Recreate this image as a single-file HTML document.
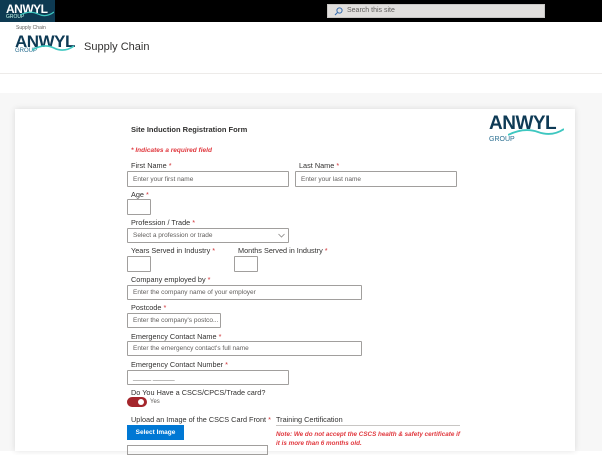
<!DOCTYPE html>
<html><head><meta charset="utf-8"><style>
*{margin:0;padding:0;box-sizing:border-box}
body{width:602px;height:451px;overflow:hidden;background:#fff;font-family:"Liberation Sans",sans-serif;position:relative;color:#323130}
.a{position:absolute;white-space:nowrap}
.lbl{font-size:7.3px;color:#323130;margin-top:1px}
.lbl b{color:#d13438;font-weight:normal}
.in{position:absolute;border:1px solid #a19f9d;background:#fff;font-size:6.5px;color:#605e5c;padding-left:5px;display:flex;align-items:center;border-radius:1px}
.red{color:#e0383e;font-style:italic;font-weight:bold;font-size:6.5px}
</style></head><body>
<div class="a" style="left:0;top:0;width:602px;height:22px;background:#000"></div>
<div class="a" style="left:0;top:0;width:55px;height:22px;background:#0e3a52"></div>
<div class="a" style="left:6px;top:2px;font-size:12px;font-weight:bold;color:#fff;letter-spacing:-0.5px">ANWYL</div>
<div class="a" style="left:6px;top:14px;font-size:5px;color:#cfe">GROUP</div>
<svg class="a" style="left:20px;top:9px" width="34" height="8"><path d="M0 6 Q10 1 18 5 T34 3" stroke="#3ec7c0" stroke-width="1.2" fill="none"/></svg>
<div class="a" style="left:327px;top:4px;width:218px;height:14px;background:#e1dfdd;border:1px solid #c8c6c4"></div>
<svg class="a" style="left:334px;top:7px" width="9" height="9"><circle cx="5.5" cy="3.5" r="2.6" stroke="#3a6fb0" fill="none" stroke-width="1"/><path d="M3.6 5.4 L1 8" stroke="#3a6fb0" stroke-width="1.1"/></svg>
<div class="a" style="left:347px;top:7px;font-size:7px;color:#605e5c">Search this site</div>

<div class="a" style="left:16px;top:25px;font-size:5px;color:#605e5c">Supply Chain</div>
<div class="a" style="left:15px;top:32px;font-size:17px;font-weight:bold;color:#0e3a55;letter-spacing:-0.5px">ANWYL</div>
<div class="a" style="left:15px;top:48px;font-size:6px;color:#2b6f91">GROUP</div>
<svg class="a" style="left:32px;top:41px" width="42" height="12"><path d="M0 9 Q12 2 22 7 T42 5" stroke="#3ec7c0" stroke-width="1.6" fill="none"/></svg>
<div class="a" style="left:84px;top:41px;font-size:11px;color:#323130">Supply Chain</div>
<div class="a" style="left:0;top:73px;width:602px;height:1px;background:#edebe9"></div>
<div class="a" style="left:0;top:93px;width:602px;height:358px;background:#f7f7f7"></div>
<div class="a" style="left:15px;top:109px;width:560px;height:342px;background:#fff;box-shadow:0 0 6px rgba(0,0,0,.12)"></div>

<div class="a" style="left:489px;top:113px;font-size:19px;font-weight:bold;color:#0e3a55;letter-spacing:-0.5px">ANWYL</div>
<div class="a" style="left:489px;top:136px;font-size:7px;color:#2b6f91">GROUP</div>
<svg class="a" style="left:508px;top:124px" width="56" height="14"><path d="M0 11 Q16 3 30 8 T56 5" stroke="#3ec7c0" stroke-width="1.8" fill="none"/></svg>

<div class="a" style="left:131px;top:125px;font-size:7.5px;font-weight:bold">Site Induction Registration Form</div>
<div class="a red" style="left:131px;top:147px">* Indicates a required field</div>

<div class="a lbl" style="left:131px;top:160px">First Name <b>*</b></div>
<div class="in" style="left:127px;top:171px;width:162px;height:16px">Enter your first name</div>
<div class="a lbl" style="left:299px;top:160px">Last Name <b>*</b></div>
<div class="in" style="left:295px;top:171px;width:162px;height:16px">Enter your last name</div>

<div class="a lbl" style="left:131px;top:189px">Age <b>*</b></div>
<div class="in" style="left:127px;top:199px;width:24px;height:16px"></div>

<div class="a lbl" style="left:131px;top:217px">Profession / Trade <b>*</b></div>
<div class="in" style="left:127px;top:228px;width:162px;height:15px">Select a profession or trade</div>
<svg class="a" style="left:278px;top:233px" width="7" height="5"><path d="M0.5 1 L3.5 4 L6.5 1" stroke="#8a8886" fill="none" stroke-width=".8"/></svg>

<div class="a lbl" style="left:131px;top:245px">Years Served in Industry <b>*</b></div>
<div class="a lbl" style="left:238px;top:245px">Months Served in Industry <b>*</b></div>
<div class="in" style="left:127px;top:256px;width:24px;height:16px"></div>
<div class="in" style="left:234px;top:256px;width:24px;height:16px"></div>

<div class="a lbl" style="left:131px;top:274px">Company employed by <b>*</b></div>
<div class="in" style="left:127px;top:285px;width:235px;height:15px">Enter the company name of your employer</div>

<div class="a lbl" style="left:131px;top:302px">Postcode <b>*</b></div>
<div class="in" style="left:127px;top:313px;width:94px;height:15px">Enter the company's postco...</div>

<div class="a lbl" style="left:131px;top:331px">Emergency Contact Name <b>*</b></div>
<div class="in" style="left:127px;top:341px;width:235px;height:15px">Enter the emergency contact's full name</div>

<div class="a lbl" style="left:131px;top:359px">Emergency Contact Number <b>*</b></div>
<div class="in" style="left:127px;top:370px;width:162px;height:15px">_____ ______</div>

<div class="a lbl" style="left:131px;top:387px">Do You Have a CSCS/CPCS/Trade card?</div>
<div class="a" style="left:127px;top:397px;width:20px;height:10px;border-radius:5px;background:#a4262c"></div>
<div class="a" style="left:138px;top:399px;width:6px;height:6px;border-radius:3px;background:#fff"></div>
<div class="a" style="left:150px;top:399px;font-size:6px;color:#605e5c">Yes</div>

<div class="a lbl" style="left:131px;top:414px">Upload an Image of the CSCS Card Front <b>*</b></div>
<div class="a" style="left:127px;top:425px;width:57px;height:15px;background:#0078d4;color:#fff;font-size:6.5px;font-weight:bold;display:flex;align-items:center;justify-content:center">Select Image</div>
<div class="a" style="left:127px;top:445px;width:141px;height:10px;border:1px solid #a19f9d"></div>

<div class="a lbl" style="left:276px;top:414px">Training Certification</div>
<div class="a" style="left:276px;top:425px;width:184px;height:1px;background:#c8c6c4"></div>
<div class="a red" style="left:276px;top:431px;font-size:6.3px">Note: We do not accept the CSCS health &amp; safety certificate if</div>
<div class="a red" style="left:276px;top:440px;font-size:6.3px">it is more than 6 months old.</div>
</body></html>
